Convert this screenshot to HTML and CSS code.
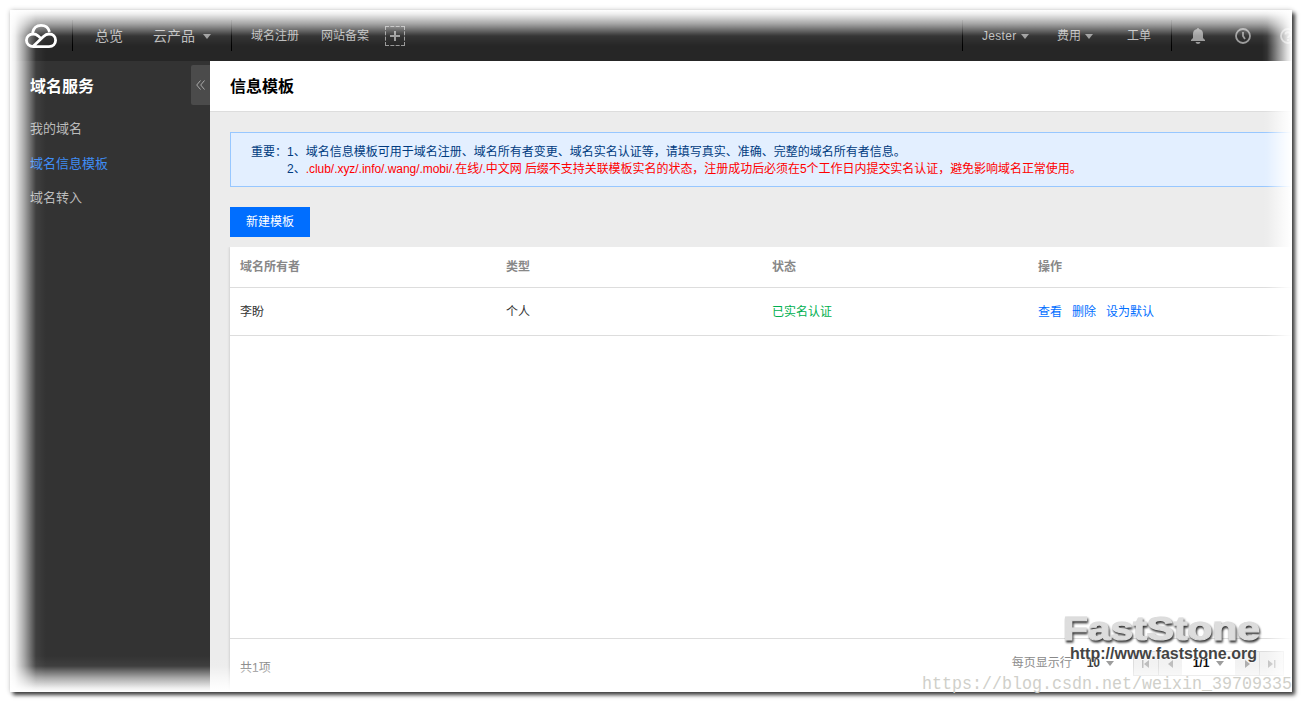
FILE: index.html
```html
<!DOCTYPE html>
<html lang="zh-CN">
<head>
<meta charset="utf-8">
<title>信息模板</title>
<link rel="stylesheet" href="styles.css">
</head>
<body>
<div class="window">
  <header class="topbar">
    <svg class="logo" width="34" height="26" viewBox="0 0 34 26" fill="none" stroke="#fff" stroke-width="2.8"><path d="M8.500 10C9.500 5 12.500 2.400 17 2.400c4.500 0 7.500 2.600 8.500 6.400M18 16.500l-4-3.700C12.300 11.400 11 11 9.300 11c-4 0-6.900 2.800-6.900 6.300s2.900 6.300 6.900 6.300H25c4 0 6.600-2.800 6.600-6.300S29 11 25 11c-2.500 0-4 1-5.800 2.700L9.500 23"/></svg>
    <i class="divider d1"></i>
    <a class="t14 overview">总览</a>
    <a class="t14 products">云产品</a><i class="caret c1"></i>
    <i class="divider d2"></i>
    <a class="domain">域名注册</a>
    <a class="record">网站备案</a>
    <svg class="add" width="20" height="20" viewBox="0 0 20 20" fill="none" stroke="#999"><path d="M0 .5h20M0 19.500h20M.5 0v20M19.500 0v20" stroke-dasharray="4 1.330"/><path d="M10 5v10M5 10h10" stroke-width="2"/></svg>
    <div class="right">
      <a class="user">Jester</a><i class="caret c2"></i>
      <a class="fee">费用</a><i class="caret c3"></i>
      <a class="ticket">工单</a>
      <div class="icons">
        <svg width="14" height="16" viewBox="0 0 14 16" fill="#999"><path d="M6 1a1 1 0 0 1 2 0c3 .5 4 2.500 4 5v4l2 2v1H0v-1l2-2V6c0-2.500 1-4.500 4-5zM4.500 14h5Q9 16 7 16T4.500 14z"/></svg>
        <svg class="clock" width="16" height="16" viewBox="0 0 16 16" fill="none" stroke="#999" stroke-width="1.800"><circle cx="8" cy="8" r="7"/><path d="M8 4v4l2 3"/></svg>
        <svg class="help" width="16" height="16" viewBox="0 0 16 16" fill="none" stroke="#999" stroke-width="1.800"><circle cx="8" cy="8" r="7"/><path d="M5.500 6.500C5.500 3.500 10.500 3.500 10.500 6.500 10.500 8 8 8 8 10M8 11v2"/></svg>
      </div>
    </div>
  </header>
  <div class="body">
    <nav class="sidebar">
      <div class="sidehead"><h2>域名服务</h2><span class="collapse"><svg width="9" height="10" viewBox="0 0 9 10" fill="none" stroke="#aaa"><path d="M4.500 .5L.7 5l3.800 4.500M8.500 .5L4.700 5l3.800 4.500"/></svg></span></div>
      <a>我的域名</a>
      <a class="active">域名信息模板</a>
      <a>域名转入</a>
    </nav>
    <main>
      <h1>信息模板</h1>
      <div class="content">
        <div class="notice">
          <p>重要：1、域名信息模板可用于域名注册、域名所有者变更、域名实名认证等，请填写真实、准确、完整的域名所有者信息。</p>
          <p class="second">2、<span>.club/.xyz/.info/.wang/.mobi/.在线/.中文网 后缀不支持关联模板实名的状态，注册成功后必须在5个工作日内提交实名认证，避免影响域名正常使用。</span></p>
        </div>
        <button>新建模板</button>
        <section class="panel">
          <div class="row head"><b>域名所有者</b><b>类型</b><b>状态</b><b>操作</b></div>
          <div class="row"><span>李盼</span><span>个人</span><span class="ok">已实名认证</span><span class="actions"><a>查看</a><a>删除</a><a>设为默认</a></span></div>
          <footer>
            <span>共1项</span>
            <div class="pager"><span>每页显示行</span><b class="size">10</b><i class="caret"></i>
              <div class="pages">
                <span class="pg"><svg width="8" height="8" fill="#bbb"><path d="M0 0h1.500v8H0zM7 0v8L2 4z"/></svg></span>
                <span class="pg"><svg width="8" height="8" fill="#bbb"><path d="M6 0v8L1 4z"/></svg></span>
                <span class="current"><b>1/1</b><i class="caret"></i></span>
                <span class="pg"><svg width="8" height="8" fill="#aaa"><path d="M2 0v8l5-4z"/></svg></span>
                <span class="pg"><svg width="8" height="8" fill="#bbb"><path d="M0 0v8l5-4zM6 0h1.500v8H6z"/></svg></span>
              </div>
            </div>
          </footer>
        </section>
      </div>
    </main>
  </div>
  <div class="fade"></div>
</div>
<svg class="stamp" width="240" height="60"><text class="brand" x="13" y="29" textLength="197" lengthAdjust="spacingAndGlyphs">FastStone</text><text class="site" x="20" y="48" textLength="187" lengthAdjust="spacingAndGlyphs">http://www.faststone.org</text></svg>
<svg class="blog" width="376" height="24"><text x="2" y="17" textLength="370" lengthAdjust="spacingAndGlyphs">https://blog.csdn.net/weixin_39709335</text></svg>
</body>
</html>
```
FILE: styles.css
```css
* { box-sizing: border-box; margin: 0; padding: 0; }
body { width: 1303px; height: 703px; padding: 10px; overflow: hidden; background: #fff; position: relative; font: 12px/17px "Liberation Sans", "Noto Sans CJK SC", sans-serif; color: #333; }
.window { width: 1282px; height: 682px; position: relative; display: flex; flex-direction: column; box-shadow: 3px 3px 4px rgba(0,0,0,.75), 0 0 5px rgba(0,0,0,.2); }
.topbar { height: 51px; flex: none; background: #262626; color: #bbb; display: flex; align-items: center; overflow: hidden; white-space: nowrap; }
.topbar > *, .right > * { flex: none; }
.topbar a { padding-top: 2px; }
.logo { margin-left: 14px; margin-top: 1px; position: relative; z-index: 3; }
.divider { width: 1px; height: 31px; background: #000; }
.d1 { margin-left: 14px; }
.t14 { font-size: 14px; }
.overview { margin-left: 22px; }
.products { margin-left: 30px; }
.caret { display: inline-block; border: 4px solid transparent; border-top: 5px solid #999; border-bottom: 0; }
.topbar .caret { margin-top: 1px; }
.c1 { margin-left: 8px; }
.d2 { margin-left: 20px; }
.domain { margin-left: 19px; }
.record { margin-left: 22px; }
.add { margin-left: 16px; }
.right { margin-left: auto; width: 330px; height: 31px; border-left: 1px solid #000; display: flex; align-items: center; }
.user { margin-left: 19px; width: 35px; letter-spacing: .3px; }
.c2 { margin-left: 4px; }
.fee { margin-left: 28px; }
.c3 { margin-left: 4px; }
.ticket { margin-left: 34px; }
.icons { margin-left: 20px; height: 31px; border-left: 1px solid #000; display: flex; align-items: center; padding-left: 19px; }
.clock { margin-left: 30px; }
.help { margin-left: 29px; }
.body { flex: 1; min-height: 0; display: flex; }
.sidebar { width: 200px; background: #333; padding-top: 4px; display: flex; flex-direction: column; }
.sidehead { height: 40px; display: flex; justify-content: space-between; align-items: center; padding-left: 20px; margin-bottom: 7px; }
h2, h1 { font-size: 16px; line-height: 24px; }
h2 { color: #fff; padding-top: 4px; }
.collapse { width: 19px; height: 40px; border-radius: 2px 0 0 2px; background: #4b4b4b; display: flex; align-items: center; justify-content: center; }
.sidebar > a { font-size: 13px; line-height: 34.500px; padding-left: 20px; color: #bbb; }
.sidebar > .active { color: #3f8df5; }
main { flex: 1; min-width: 0; display: flex; flex-direction: column; background: #ececec; }
h1 { height: 51px; flex: none; line-height: 52px; padding-left: 20px; background: #fff; border-bottom: 1px solid #ddd; color: #000; }
.content { flex: 1; min-height: 0; display: flex; flex-direction: column; align-items: flex-start; padding: 20px 0 0 20px; }
.notice { width: 100%; height: 55px; flex: none; border: 1px solid #97c7ff; border-right: 0; background: #e3efff; color: #003b80; padding: 11px 20px 0; white-space: nowrap; }
.second { padding-left: 36px; }
.second span { color: #f00; letter-spacing: -.04px; }
button { margin: 20px 0 10px; padding-top: 1px; width: 80px; height: 30px; flex: none; background: #006eff; color: #fff; border: 0; font: inherit; }
.panel { flex: 1; width: 100%; background: #fff; display: flex; flex-direction: column; box-shadow: 0 0 3px rgba(0,0,0,.2); clip-path: inset(0 0 0 -4px); }
.row { display: grid; grid-template-columns: repeat(4, 266px); padding: 2px 0 0 10px; height: 48px; flex: none; align-items: center; border-bottom: 1px solid #ddd; overflow: hidden; }
.head { height: 41px; padding-top: 0; color: #888; }
.ok { color: #00b050; }
.actions { display: flex; gap: 10px; color: #006eff; }
footer { margin-top: auto; height: 54px; border-top: 1px solid #ddd; padding: 0 8px 0 10px; display: flex; align-items: center; justify-content: space-between; color: #888; }
footer > span { padding-top: 6px; }
.pager { display: flex; align-items: center; padding-bottom: 4px; }
.size { color: #333; margin: 0 6px 0 15px; }
.pages { display: flex; margin-left: 19px; height: 25px; border: 1px solid #ddd; }
.pg { width: 24px; background: #f2f2f2; display: flex; align-items: center; justify-content: center; }
.pg + .pg { border-left: 1px solid #ddd; }
.current { width: 53px; display: flex; align-items: center; justify-content: center; gap: 7px; color: #000; }
.fade { position: absolute; inset: 0; z-index: 2; pointer-events: none; background:
 linear-gradient(to right, #fff 0, rgba(255,255,255,.92) 5px, rgba(255,255,255,.58) 14px, rgba(255,255,255,.06) 26px, transparent 36px),
 linear-gradient(to left, #fff 0, rgba(255,255,255,.85) 5px, rgba(255,255,255,.5) 14px, rgba(255,255,255,.06) 25px, transparent 30px),
 linear-gradient(to bottom, #fff 0, rgba(255,255,255,.92) 4px, rgba(255,255,255,.58) 14px, rgba(255,255,255,.07) 26px, transparent 36px),
 linear-gradient(to top, #fff 0, rgba(255,255,255,.92) 4px, rgba(255,255,255,.58) 14px, rgba(255,255,255,.06) 26px, transparent 36px); }
.stamp { position: absolute; left: 1050px; top: 611px; z-index: 4; overflow: visible; }
.brand { font: bold 34px "Liberation Sans", sans-serif; fill: #ddd; stroke: #ddd; stroke-width: 1.200px; filter: drop-shadow(1px 2px 1px #333); }
.site { font: bold 16px "Liberation Sans", sans-serif; fill: #444; stroke: #fff; stroke-width: 1px; paint-order: stroke; }
.blog { position: absolute; left: 920px; top: 672px; z-index: 4; }
.blog text { font: 18px "Liberation Mono", monospace; fill: #d0d0ca; }
```
